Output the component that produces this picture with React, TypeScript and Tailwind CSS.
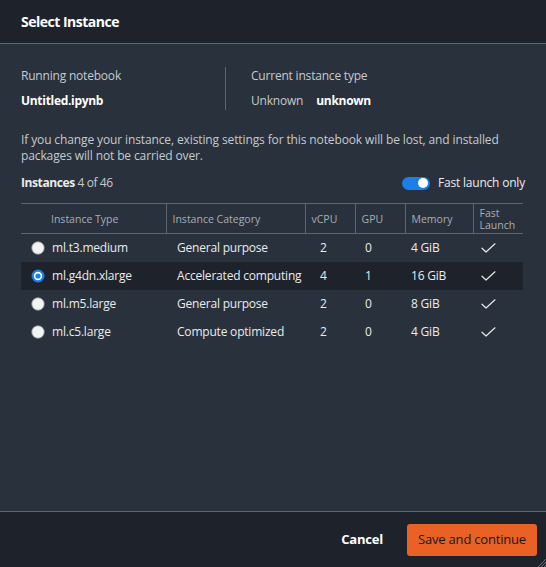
import { twJoin } from "tailwind-merge";

type Row = {
  type: string;
  category: string;
  vcpu: number;
  gpu: number;
  memory: string;
  selected?: boolean;
};

const rows: Row[] = [
  { type: "ml.t3.medium", category: "General purpose", vcpu: 2, gpu: 0, memory: "4 GiB" },
  { type: "ml.g4dn.xlarge", category: "Accelerated computing", vcpu: 4, gpu: 1, memory: "16 GiB", selected: true },
  { type: "ml.m5.large", category: "General purpose", vcpu: 2, gpu: 0, memory: "8 GiB" },
  { type: "ml.c5.large", category: "Compute optimized", vcpu: 2, gpu: 0, memory: "4 GiB" },
];

const Radio = ({ checked }: { checked?: boolean }) =>
  checked ? (
    <svg width="14" height="14" viewBox="0 0 14 14">
      <circle cx="7" cy="7" r="6.5" fill="#1a7fe6" />
      <circle cx="7" cy="7" r="4.2" fill="#ffffff" />
      <circle cx="7" cy="7" r="2.6" fill="#1a7fe6" />
    </svg>
  ) : (
    <svg width="14" height="14" viewBox="0 0 14 14">
      <circle cx="7" cy="7" r="6.2" fill="#f2f3f3" stroke="#9aa0a7" strokeWidth="0.8" />
    </svg>
  );

const Check = () => (
  <svg width="15" height="10" viewBox="0 0 15 10" fill="none">
    <path d="M1 5.2 L5 9 L14 0.8" stroke="#e6e8eb" strokeWidth="1.2" strokeLinecap="round" strokeLinejoin="round" />
  </svg>
);

const headCell = "border-l border-[#5f6670] px-[6px] text-left align-middle font-normal";

export default function App() {
  return (
    <div className="flex h-[567px] w-[546px] flex-col bg-[#29313c] font-['Open_Sans',sans-serif] text-[#e9ebed]">
      <div className="flex h-[44px] shrink-0 items-center border-b border-[#5f6670] bg-[#1e232b] px-[21px]">
        <h1 className="text-[14px] font-bold tracking-[-0.5px] text-white">Select Instance</h1>
      </div>

      <div className="flex flex-1 flex-col px-[21px] pt-[23px]">
        <div className="flex">
          <div className="flex w-[205px] flex-col gap-[9px] border-r border-[#5f6670] py-[1px]">
            <span className="text-[12px] leading-[16px] tracking-[-0.2px] text-[#c6cace]">Running notebook</span>
            <span className="text-[12px] font-bold leading-[16px] tracking-[-0.3px] text-white">Untitled.ipynb</span>
          </div>
          <div className="flex flex-col gap-[9px] py-[1px] pl-[25px]">
            <span className="text-[12px] leading-[16px] tracking-[-0.2px] text-[#c6cace]">Current instance type</span>
            <div className="flex gap-[13px] text-[12px] leading-[16px] tracking-[-0.2px]">
              <span className="text-[#c6cace]">Unknown</span>
              <span className="font-bold tracking-[-0.3px] text-white">unknown</span>
            </div>
          </div>
        </div>

        <p className="mt-[22px] text-[12px] leading-[16px] tracking-[-0.12px] text-[#c6cace]">
          If you change your instance, existing settings for this notebook will be lost, and installed packages will
          not be carried over.
        </p>

        <div className="mt-[10px] flex items-center justify-between">
          <span className="text-[12px] tracking-[-0.4px] text-[#c6cace]">
            <span className="font-bold text-[#e9ebed]">Instances</span> 4 of 46
          </span>
          <div className="flex items-center gap-[8px]">
            <div className="flex h-[13px] w-[28px] items-center justify-end rounded-full bg-[#1a7fe6] px-[2px]">
              <div className="h-[10px] w-[10px] rounded-full bg-white" />
            </div>
            <span className="text-[12px] tracking-[-0.2px] text-[#e9ebed]">Fast launch only</span>
          </div>
        </div>

        <table className="mt-[11px] w-[502px] table-fixed border-collapse">
          <colgroup>
            <col className="w-[145px]" />
            <col className="w-[139px]" />
            <col className="w-[50px]" />
            <col className="w-[50px]" />
            <col className="w-[68px]" />
            <col className="w-[50px]" />
          </colgroup>
          <thead>
            <tr className="h-[30px] border-y border-[#5f6670] text-[10.5px] leading-[12px] text-[#a8aeb5]">
              <th className="pl-[30px] text-left font-normal">Instance Type</th>
              <th className={headCell}>Instance Category</th>
              <th className={headCell}>vCPU</th>
              <th className={headCell}>GPU</th>
              <th className={headCell}>Memory</th>
              <th className={headCell}>
                <div>Fast</div>
                <div>Launch</div>
              </th>
            </tr>
          </thead>
          <tbody className="text-[12px] tracking-[-0.2px] whitespace-nowrap text-[#e9ebed]">
            {rows.map((r) => (
              <tr key={r.type} className={twJoin("h-[28px]", r.selected && "bg-[#1e232b]")}>
                <td className="pl-[10px]">
                  <div className="flex items-center gap-[7px]">
                    <Radio checked={r.selected} />
                    <span>{r.type}</span>
                  </div>
                </td>
                <td className="pl-[11px]">{r.category}</td>
                <td className="pl-[15px]">{r.vcpu}</td>
                <td className="pl-[10px]">{r.gpu}</td>
                <td className="pl-[6px]">{r.memory}</td>
                <td className="pl-[8px]">
                  <Check />
                </td>
              </tr>
            ))}
          </tbody>
        </table>
      </div>

      <div className="relative flex h-[56px] shrink-0 items-center justify-end gap-[24px] border-t border-[#5f6670] bg-[#1e232b] pr-[9px]">
        <button type="button" className="text-[13px] font-bold tracking-[-0.2px] text-white">
          Cancel
        </button>
        <button
          type="button"
          className="h-[32px] w-[130px] rounded-[3px] bg-[#ea6125] text-[13px] font-medium tracking-[-0.2px] text-[#16191f]"
        >
          Save and continue
        </button>
        <svg className="absolute right-0 bottom-0" width="10" height="10" viewBox="0 0 10 10">
          <path d="M10 2 L2 10 M10 5 L5 10 M10 8 L8 10" stroke="#7d838b" strokeWidth="0.8" />
        </svg>
      </div>
    </div>
  );
}
